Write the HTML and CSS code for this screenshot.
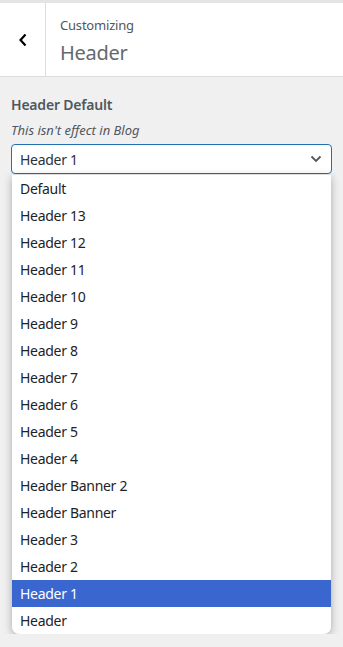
FILE: index.html
```html
<!DOCTYPE html>
<html lang="en">
<head>
    <meta charset="UTF-8">
    <meta name="viewport" content="width=device-width, initial-scale=1.0">
    <title>Customizing Header</title>
    <link rel="stylesheet" href="styles.css">
</head>
<body>
    <!-- top panel -->
    <div class="panel-head">
        <button class="back-btn" aria-label="Back">
            <svg width="10" height="14" viewBox="0 0 10 14"><path d="M7.5 1.5 L2.5 7 L7.5 12.5" fill="none" stroke="#000" stroke-width="2.2"/></svg>
        </button>
        <div class="panel-title">
            <span class="action">Customizing</span>
            <h2>Header</h2>
        </div>
    </div>

    <!-- control -->
    <div class="control">
        <span class="control-label">Header Default</span>
        <span class="control-desc">This isn't effect in Blog</span>
        <div class="select-box">
            <span>Header 1</span>
            <svg width="12" height="8" viewBox="0 0 12 8"><path d="M1.5 1.5 L6 6 L10.5 1.5" fill="none" stroke="#50575e" stroke-width="1.8"/></svg>
        </div>
        <ul class="dropdown">
            <li>Default</li>
            <li>Header 13</li>
            <li>Header 12</li>
            <li>Header 11</li>
            <li>Header 10</li>
            <li>Header 9</li>
            <li>Header 8</li>
            <li>Header 7</li>
            <li>Header 6</li>
            <li>Header 5</li>
            <li>Header 4</li>
            <li>Header Banner 2</li>
            <li>Header Banner</li>
            <li>Header 3</li>
            <li>Header 2</li>
            <li class="selected">Header 1</li>
            <li>Header</li>
        </ul>
    </div>
</body>
</html>
```

FILE: styles.css
```css
/* base */
body {
    margin: 0;
    font-family: "Noto Sans", "Open Sans", sans-serif;
    background-color: #f0f0f1;
    color: #50575e;
}

/* top panel */
.panel-head {
    display: flex;
    height: 73px;
    background: #fff;
    border-top: 3px solid #e4e4e6;
    border-bottom: 1px solid #dcdcde;
}

.back-btn {
    width: 46px;
    padding: 0;
    margin: 0;
    border: none;
    border-right: 1px solid #dcdcde;
    background: #fff;
    display: flex;
    align-items: center;
    justify-content: center;
}

.panel-title {
    padding: 12px 0 0 14px;
}

.panel-title .action {
    display: block;
    font-size: 13px;
    line-height: 20px;
    color: #50575e;
    letter-spacing: -0.2px;
}

.panel-title h2 {
    margin: 4px 0 0;
    font-size: 20px;
    font-weight: 400;
    line-height: 28px;
    color: #646970;
    letter-spacing: -0.3px;
}

/* control */
.control {
    padding: 18px 11px 0;
}

.control-label {
    display: block;
    font-size: 14px;
    font-weight: 600;
    line-height: 20px;
    letter-spacing: -0.2px;
}

.control-desc {
    display: block;
    margin-top: 6px;
    font-size: 13px;
    font-style: italic;
    line-height: 18px;
}

.select-box {
    margin-top: 5px;
    height: 28px;
    border: 1px solid #2271b1;
    border-radius: 4px;
    background: #fff;
    display: flex;
    align-items: center;
    justify-content: space-between;
    padding: 0 9px 0 8px;
    font-size: 14px;
    color: #2c3338;
    letter-spacing: -0.3px;
}

.dropdown {
    list-style: none;
    margin: 1px 0 0 1px;
    padding: 0;
    width: 319px;
    background: #fff;
    border-radius: 0 0 7px 7px;
    box-shadow: 0 2px 8px rgba(0, 0, 0, 0.3);
    overflow: hidden;
}

.dropdown li {
    height: 27px;
    line-height: 27px;
    padding-left: 8px;
    font-size: 14px;
    color: #1d2327;
    letter-spacing: -0.3px;
}

.dropdown li.selected {
    background: #3966cf;
    color: #fff;
}
```
